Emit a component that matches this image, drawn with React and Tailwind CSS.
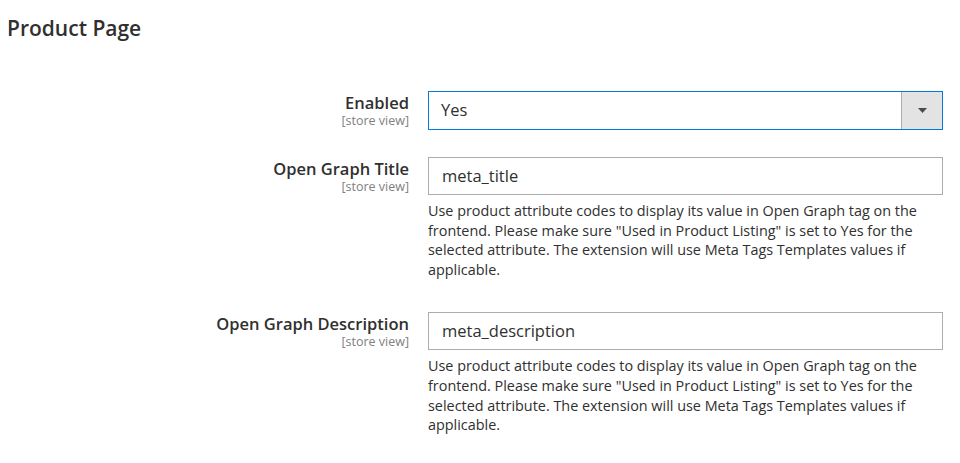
import React from "react";

const note =
  'Use product attribute codes to display its value in Open Graph tag on the frontend. Please make sure "Used in Product Listing" is set to Yes for the selected attribute. The extension will use Meta Tags Templates values if applicable.';

const Label = ({ text }) => (
  <div className="w-[409px] shrink-0 text-right">
    <div className="text-[16.5px] font-semibold leading-[23px] text-[#303030]">{text}</div>
    <div className="text-[12.5px] leading-[14px] text-[#808080]">[store view]</div>
  </div>
);

const TextRow = ({ label, value, className = "" }) => (
  <div className={"flex " + className}>
    <Label text={label} />
    <div className="ml-[19px] w-[515px]">
      <div className="h-[38px] border border-[#adadad] bg-white px-[13px] flex items-center text-[16.5px] text-[#303030]">
        {value}
      </div>
      <p className="mt-[6px] pr-[20px] text-[14.4px] leading-[19.6px] text-[#303030]">{note}</p>
    </div>
  </div>
);

export default function App() {
  return (
    <div className="min-h-[463px] bg-white font-['Open_Sans',sans-serif]">
      <h2 className="pl-[7px] pt-[14px] text-[21px] font-semibold leading-[28px] text-[#303030]">
        Product Page
      </h2>
      <div className="mt-[49px] flex flex-col">
        <div className="flex">
          <Label text="Enabled" />
          <div className="ml-[19px] w-[515px] h-[39px] border border-[#007bdb] bg-white flex">
            <div className="flex-1 px-[12px] flex items-center text-[16.5px] text-[#303030]">Yes</div>
            <div className="w-[41px] border-l border-[#adadad] bg-[#e3e3e3] flex items-center justify-center">
              <svg width="9" height="5" viewBox="0 0 9 5">
                <path d="M0 0h9L4.5 5z" fill="#514943" />
              </svg>
            </div>
          </div>
        </div>
        <TextRow label="Open Graph Title" value="meta_title" className="mt-[27px]" />
        <TextRow label="Open Graph Description" value="meta_description" className="mt-[33px]" />
      </div>
    </div>
  );
}
